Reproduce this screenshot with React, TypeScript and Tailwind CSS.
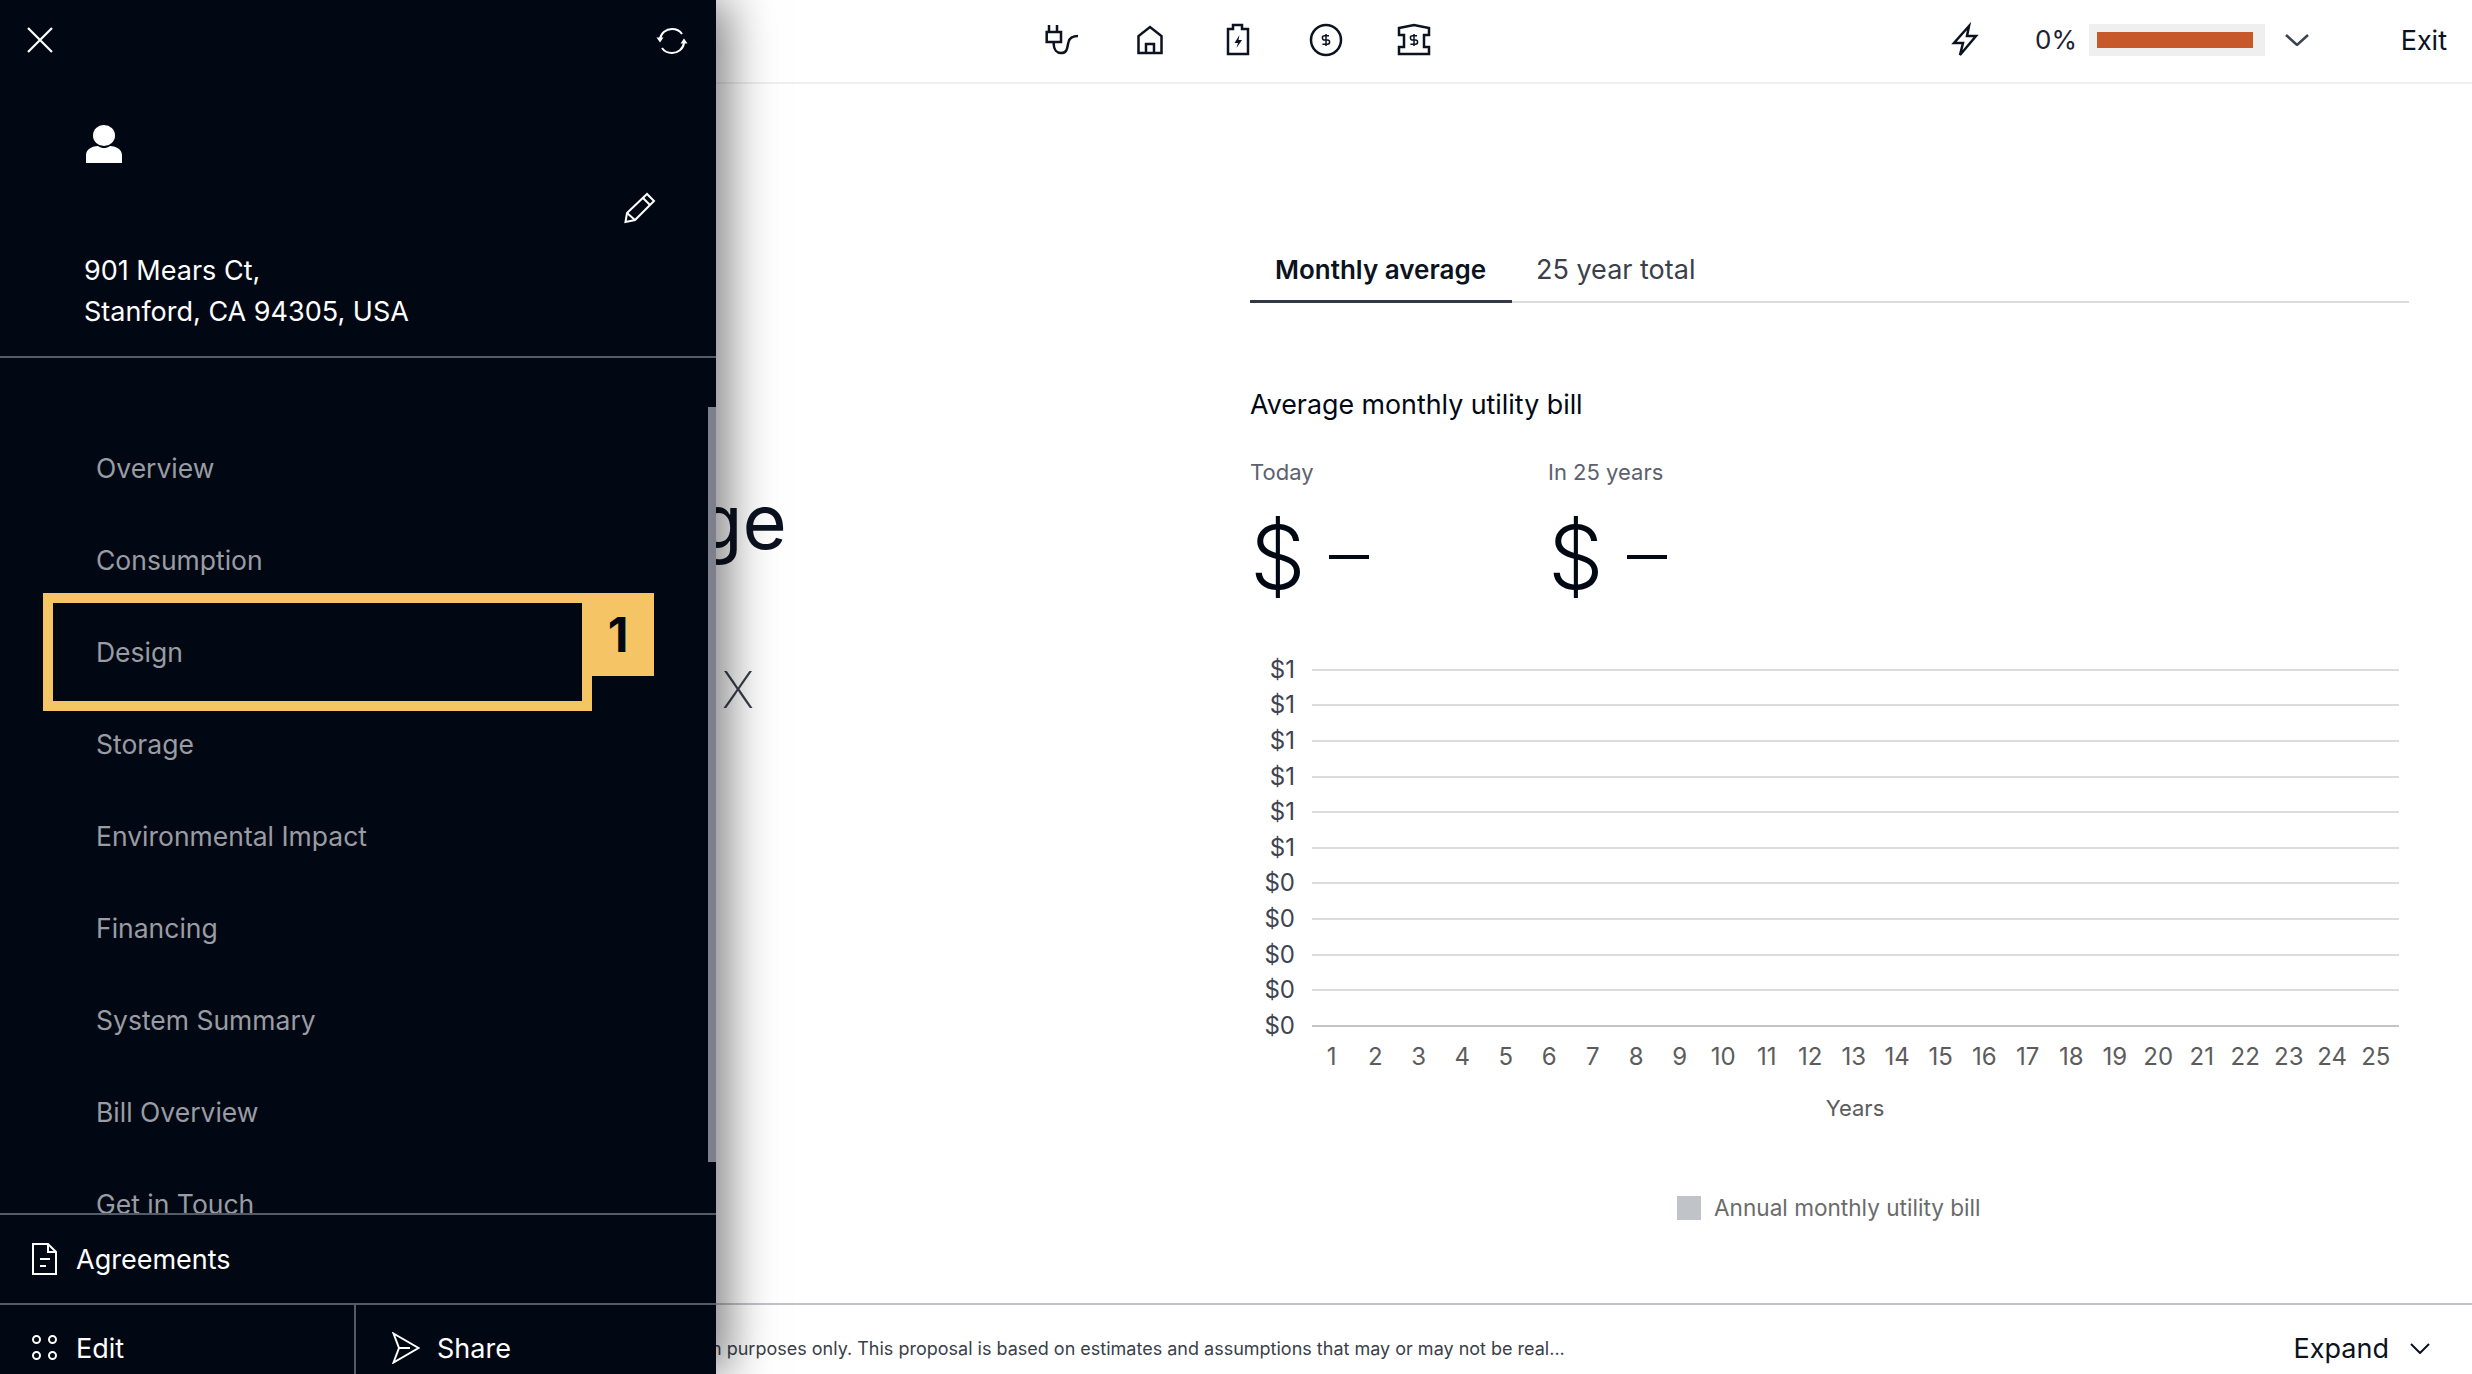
import React from "react";

const navItems = ["Overview", "Consumption", "Design", "Storage", "Environmental Impact", "Financing", "System Summary", "Bill Overview", "Get in Touch"];
const yLabels = ["$1", "$1", "$1", "$1", "$1", "$1", "$0", "$0", "$0", "$0", "$0"];
const years = Array.from({ length: 25 }, (_, i) => i + 1);

function Dollar() {
  return (
    <g transform="translate(12.8 12.8) scale(0.6)">
      <path d="M17 5H9.5a3.5 3.5 0 0 0 0 7h5a3.5 3.5 0 0 1 0 7H6" />
      <path d="M12 2v20" />
    </g>
  );
}

function TopIcon({ children }: { children: React.ReactNode }) {
  return (
    <svg viewBox="0 0 40 40" className="w-10 h-10 text-[#0b1220]" fill="none" stroke="currentColor" strokeWidth="2.5">
      {children}
    </svg>
  );
}

function Stat({ label, width }: { label: string; width: string }) {
  return (
    <div className={width}>
      <div className="text-[22px] leading-[28px] text-[#5c616d]">{label}</div>
      <div className="mt-[27px] flex items-center h-[88px]">
        <span className="text-[88px] leading-none font-light text-[#000814]">$</span>
        <span className="ml-[23px] w-[40px] h-[4px] bg-[#000814]" />
      </div>
    </div>
  );
}

export default function App() {
  return (
    <div className="relative w-[2472px] h-[1374px] overflow-hidden bg-white flex flex-col font-['Inter',sans-serif] text-[#000814]">
      {/* Top bar */}
      <header className="h-[84px] shrink-0 border-b-2 border-[#efefef] flex items-center pb-[2px]">
        <div className="ml-[1042px] flex gap-[48px]">
          <TopIcon>
            <path d="M7 5v7M15 5v7" />
            <rect x="4.7" y="12" width="14.3" height="10" />
            <path d="M11.7 22v2c0 6 3.3 9 7.3 9 7 0 6-6 7.500-11 1-4 4.500-6 9.500-6" />
          </TopIcon>
          <TopIcon>
            <path d="M8.500 33V16L20 7l11.500 9v17Z" />
            <path d="M16 33V24h8v9" />
          </TopIcon>
          <TopIcon>
            <path d="M10 9h5V5h9v4h6v25H10Z" />
            <path d="M21.500 15l-5 8h3.500l-1.500 5 5.500-8h-3.500Z" fill="currentColor" stroke="none" />
          </TopIcon>
          <TopIcon>
            <circle cx="20" cy="20" r="15" />
            <Dollar />
          </TopIcon>
          <TopIcon>
            <path d="M5 8l15-3 15 3v7h-5v12h5v7H5v-7h5V15H5Z" />
            <Dollar />
          </TopIcon>
        </div>
        <svg viewBox="0 0 40 40" className="ml-[511px] w-10 h-10 text-[#0b1220]" fill="none" stroke="currentColor" strokeWidth="2.500">
          <path d="M24 6 9 23h9l-3 12 16-19h-9Z" />
        </svg>
        <span className="ml-[50px] text-[26px] leading-none text-[#1c2230]">0%</span>
        <div className="ml-[12px] w-[176px] h-[32px] bg-[#efefef] flex items-center pl-[8px]">
          <div className="w-[156px] h-[16px] bg-[#c6582a]" />
        </div>
        <svg viewBox="0 0 24 12" className="ml-[20px] w-[24px] h-[12px] text-[#3d4250]" fill="none" stroke="currentColor" strokeWidth="2.500">
          <path d="M1 1l11 10L23 1" />
        </svg>
        <span className="ml-auto mr-[25px] text-[27px] leading-none text-[#0b1220]">Exit</span>
      </header>

      {/* Main */}
      <main className="flex-1 flex min-h-0">
        <div className="w-[1250px] shrink-0 pl-[696px] pt-[392px]">
          <div className="text-[76px] leading-[90px] text-[#0b1220]">ge</div>
          <div className="mt-[94px] pl-[26px] text-[50px] leading-[60px] font-extralight text-[#3a3f4a]">X</div>
        </div>
        <section className="w-[1159px] pt-[161px]">
          <div className="flex border-b-2 border-[#dcdcdc] h-[58px]">
            <div className="w-[262px] pl-[25px] border-b-[3px] border-[#333845] -mb-[2px] text-[26px] leading-[50px] font-semibold text-[#0b1220]">Monthly average</div>
            <div className="ml-[24px] text-[27px] leading-[50px] text-[#3a3f4a]">25 year total</div>
          </div>
          <h2 className="mt-[81px] text-[26.8px] leading-[40px] font-normal text-[#000814]">Average monthly utility bill</h2>
          <div className="mt-[34px] flex">
            <Stat label="Today" width="w-[298px]" />
            <Stat label="In 25 years" width="w-[300px]" />
          </div>

          {/* Chart */}
          <div className="mt-[51px] w-[1149px]">
            {yLabels.map((label, i) => (
              <div key={i} className="flex items-center h-[35.6px]">
                <span className="w-[45px] text-right text-[24px] leading-none text-[#3f4450]">{label}</span>
                <div className={`ml-[17px] flex-1 h-[2px] ${i === 10 ? "bg-[#c4c4c4]" : "bg-[#dcdcdc]"}`} />
              </div>
            ))}
            <div className="ml-[60px] w-[1088px] grid grid-cols-[repeat(25,43.5px)] -mt-[1px]">
              {years.map((y) => (
                <span key={y} className="text-center text-[24px] leading-[28px] text-[#5c5c5c]">{y}</span>
              ))}
            </div>
            <div className="ml-[60px] w-[1090px] mt-[23px] text-center text-[22px] leading-[28px] text-[#5c5c5c]">Years</div>
            <div className="mt-[72px] ml-[427px] flex items-center gap-[13px]">
              <div className="w-[24px] h-[24px] bg-[#c0c4c8]" />
              <span className="text-[22.6px] leading-[28px] text-[#6b6b6b]">Annual monthly utility bill</span>
            </div>
          </div>
        </section>
      </main>

      {/* Footer */}
      <footer className="h-[71px] shrink-0 border-t-2 border-[#c0c4c8] flex items-center pt-[18px]">
        <p className="ml-[711px] text-[18px] leading-none text-[#3a3f4a] whitespace-nowrap">n purposes only. This proposal is based on estimates and assumptions that may or may not be real...</p>
        <span className="ml-auto text-[27px] leading-none text-[#0b1220]">Expand</span>
        <svg viewBox="0 0 20 11" className="ml-[21px] mr-[42px] w-[20px] h-[11px] text-[#0b1220]" fill="none" stroke="currentColor" strokeWidth="2">
          <path d="M1 1l9 9 9-9" />
        </svg>
      </footer>

      {/* Sidebar drawer */}
      <aside className="absolute left-0 top-0 w-[716px] h-[1374px] bg-[#010813] text-white flex flex-col shadow-[12px_0_44px_rgba(0,0,0,0.5)]">
        <div className="h-[358px] shrink-0 border-b-2 border-[#555b66] flex flex-col">
          <div className="flex items-start justify-between pt-[27px] pl-[27px] pr-[28px]">
            <svg viewBox="0 0 26 26" className="w-[26px] h-[26px]" fill="none" stroke="white" strokeWidth="2.200">
              <path d="M1 1l24 24M25 1L1 25" />
            </svg>
            <svg viewBox="0 0 32 28" className="w-[32px] h-[28px]" fill="none" stroke="white" strokeWidth="2">
              <path d="M4 12C5 6 10 2 16 2c5 0 8 2 10 5" />
              <path d="M28 16c-1 6-6 10-12 10-5 0-8-2-10-5" />
              <path d="M0.500 10.500h7L4 15.500Z" fill="white" stroke="none" />
              <path d="M24.500 16.500h7L28 11.500Z" fill="white" stroke="none" />
            </svg>
          </div>
          <svg viewBox="0 0 36 38" className="ml-[86px] mt-[70px] w-[36px] h-[38px] shrink-0" fill="white">
            <ellipse cx="18" cy="10.500" rx="11" ry="10.500" />
            <path d="M0 38V30c0-6 7-9 12-9 2 1.500 4 2 6 2s4-.5 6-2c5 0 12 3 12 9v8Z" />
          </svg>
          <div className="flex justify-end pr-[60px] mt-[29px] h-0">
            <svg viewBox="0 0 32 32" className="w-[32px] h-[32px] shrink-0" fill="none" stroke="white" strokeWidth="2">
              <path d="M1.500 30l1.500-9L23 2l7 7-19 19Z" />
              <path d="M19 6l7 7" />
              <path d="M3 21l8 7" />
            </svg>
          </div>
          <div className="mt-[58px] pl-[84px] text-[27px] leading-[41px]">
            <div>901 Mears Ct,</div>
            <div>Stanford, CA 94305, USA</div>
          </div>
        </div>

        <nav className="relative flex-1 min-h-0 overflow-hidden pt-[65px]">
          {navItems.map((item) => (
            <div key={item} className="h-[92px] pl-[96px] flex items-center text-[26.5px] text-[#9a9ca3] whitespace-nowrap">{item}</div>
          ))}
          <div className="absolute right-0 top-[49px] w-[8px] h-[755px] bg-[#7b808c]" />
        </nav>

        <div className="h-[90px] shrink-0 border-t-2 border-[#555b66] flex items-center pl-[32px] gap-[19px]">
          <svg viewBox="0 0 25 32" className="w-[25px] h-[32px]" fill="none" stroke="white" strokeWidth="2">
            <path d="M1 1h15l8 8v22H1Z" />
            <path d="M16 1v8h8" />
            <path d="M8 16h10M8 23h6" />
          </svg>
          <span className="text-[27px] leading-none">Agreements</span>
        </div>
        <div className="h-[71px] shrink-0 border-t-2 border-[#555b66] flex">
          <div className="w-[356px] border-r-2 border-[#555b66] flex items-start pt-[30px] pl-[32px] gap-[19px]">
            <svg viewBox="0 0 25 25" className="w-[25px] h-[25px]" fill="none" stroke="white" strokeWidth="2">
              <circle cx="4.500" cy="4.500" r="3.500" />
              <circle cx="20.500" cy="4.500" r="3.500" />
              <circle cx="4.500" cy="20.500" r="3.500" />
              <circle cx="20.500" cy="20.500" r="3.500" />
            </svg>
            <span className="text-[27px] leading-[28px]">Edit</span>
          </div>
          <div className="flex items-start pt-[27px] pl-[36px] gap-[17px]">
            <svg viewBox="0 0 28 32" className="w-[28px] h-[32px]" fill="none" stroke="white" strokeWidth="2">
              <path d="M1.500 1.500 26.500 16 1.500 30.500 7 16Z" />
              <path d="M7 16h11" />
            </svg>
            <span className="text-[27px] leading-[34px]">Share</span>
          </div>
        </div>

        {/* Tutorial highlight */}
        <div className="absolute left-[43px] top-[593px] w-[549px] h-[118px] border-[10px] border-[#f4c465]" />
        <div className="absolute left-[582px] top-[593px] w-[72px] h-[83px] bg-[#f4c465] flex items-center justify-center text-[48px] font-bold leading-none text-[#000814]">1</div>
      </aside>
    </div>
  );
}
